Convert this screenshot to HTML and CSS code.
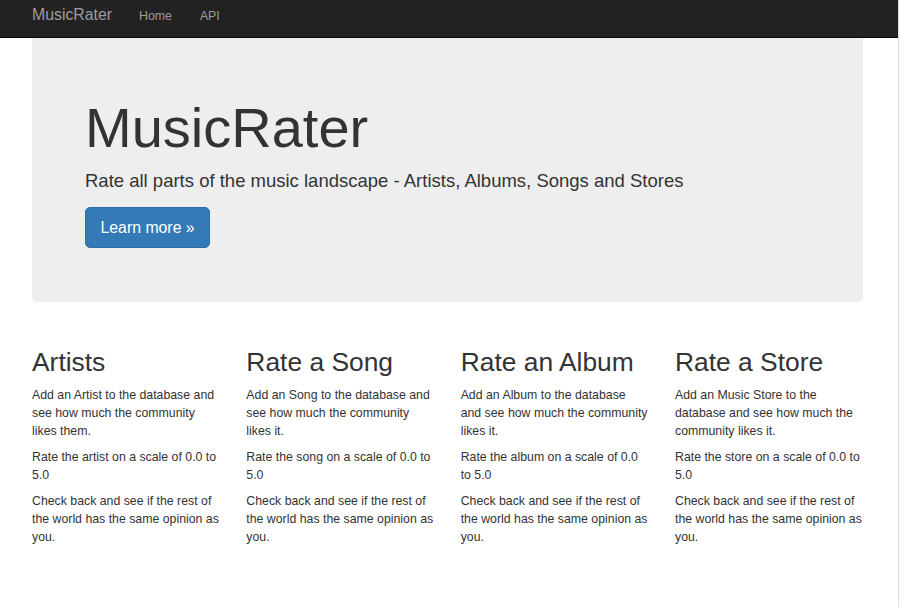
FILE: index.html
```html
<!DOCTYPE html>
<html lang="en">
<head>
<meta charset="utf-8">
<title>MusicRater</title>
<link rel="stylesheet" href="styles.css">
</head>
<body>
<div class="page">
  <nav class="navbar">
    <a class="brand" href="#">MusicRater</a>
    <a class="nav-link" href="#">Home</a>
    <a class="nav-link" href="#">API</a>
  </nav>
  <main class="container">
    <section class="jumbotron">
      <h1>MusicRater</h1>
      <p class="lead">Rate all parts of the music landscape - Artists, Albums, Songs and Stores</p>
      <a class="btn" href="#">Learn more &raquo;</a>
    </section>
    <div class="row">
      <div class="col">
        <h2>Artists</h2>
        <p>Add an Artist to the database and see how much the community likes them.</p>
        <p>Rate the artist on a scale of 0.0 to 5.0</p>
        <p>Check back and see if the rest of the world has the same opinion as you.</p>
      </div>
      <div class="col">
        <h2>Rate a Song</h2>
        <p>Add an Song to the database and see how much the community likes it.</p>
        <p>Rate the song on a scale of 0.0 to 5.0</p>
        <p>Check back and see if the rest of the world has the same opinion as you.</p>
      </div>
      <div class="col">
        <h2>Rate an Album</h2>
        <p>Add an Album to the database and see how much the community likes it.</p>
        <p>Rate the album on a scale of 0.0 to 5.0</p>
        <p>Check back and see if the rest of the world has the same opinion as you.</p>
      </div>
      <div class="col">
        <h2>Rate a Store</h2>
        <p>Add an Music Store to the database and see how much the community likes it.</p>
        <p>Rate the store on a scale of 0.0 to 5.0</p>
        <p>Check back and see if the rest of the world has the same opinion as you.</p>
      </div>
    </div>
  </main>
</div>
</body>
</html>
```

FILE: styles.css
```css
html, body {
  margin: 0;
  padding: 0;
  background: #fff;
}

body {
  font-family: "Liberation Sans", Arial, sans-serif;
  color: #333;
}

.page {
  box-sizing: border-box;
  width: 899px;
  min-height: 607px;
  border-right: 1px solid #dcdcdc;
}

.navbar {
  box-sizing: border-box;
  height: 38px;
  background: #222;
  border-bottom: 1px solid #080808;
  display: flex;
  align-items: baseline;
  padding: 5px 0 0 32px;
}

.navbar a {
  color: #9d9d9d;
  text-decoration: none;
  line-height: 20px;
}

.brand {
  font-size: 15.84px;
  margin-right: 27px;
}

.nav-link {
  font-size: 12.32px;
  margin-right: 28px;
}

.container {
  padding: 0 0 0 32px;
  width: 831px;
}

.jumbotron {
  background: #eee;
  border-radius: 0 0 5px 5px;
  padding: 59px 53px 54px 53px;
  margin-bottom: 26px;
}

.jumbotron h1 {
  margin: 0 0 9px 0;
  font-size: 56px;
  font-weight: 400;
  line-height: 62px;
}

.lead {
  margin: 0 0 13px 0;
  font-size: 18.5px;
  line-height: 26px;
}

.btn {
  display: inline-block;
  box-sizing: border-box;
  height: 41px;
  padding: 8px 14.5px;
  font-size: 15.84px;
  line-height: 23px;
  color: #fff;
  text-decoration: none;
  background: #337ab7;
  border: 1px solid #2e6da4;
  border-radius: 5px;
}

.row {
  display: grid;
  grid-template-columns: repeat(4, 188.5px);
  column-gap: 25.83px;
}

.col h2 {
  margin: 20px 0 9px 0;
  font-size: 26.4px;
  font-weight: 400;
  line-height: 29px;
}

.col p {
  margin: 0 0 8px 0;
  font-size: 12.32px;
  line-height: 18px;
}
```
